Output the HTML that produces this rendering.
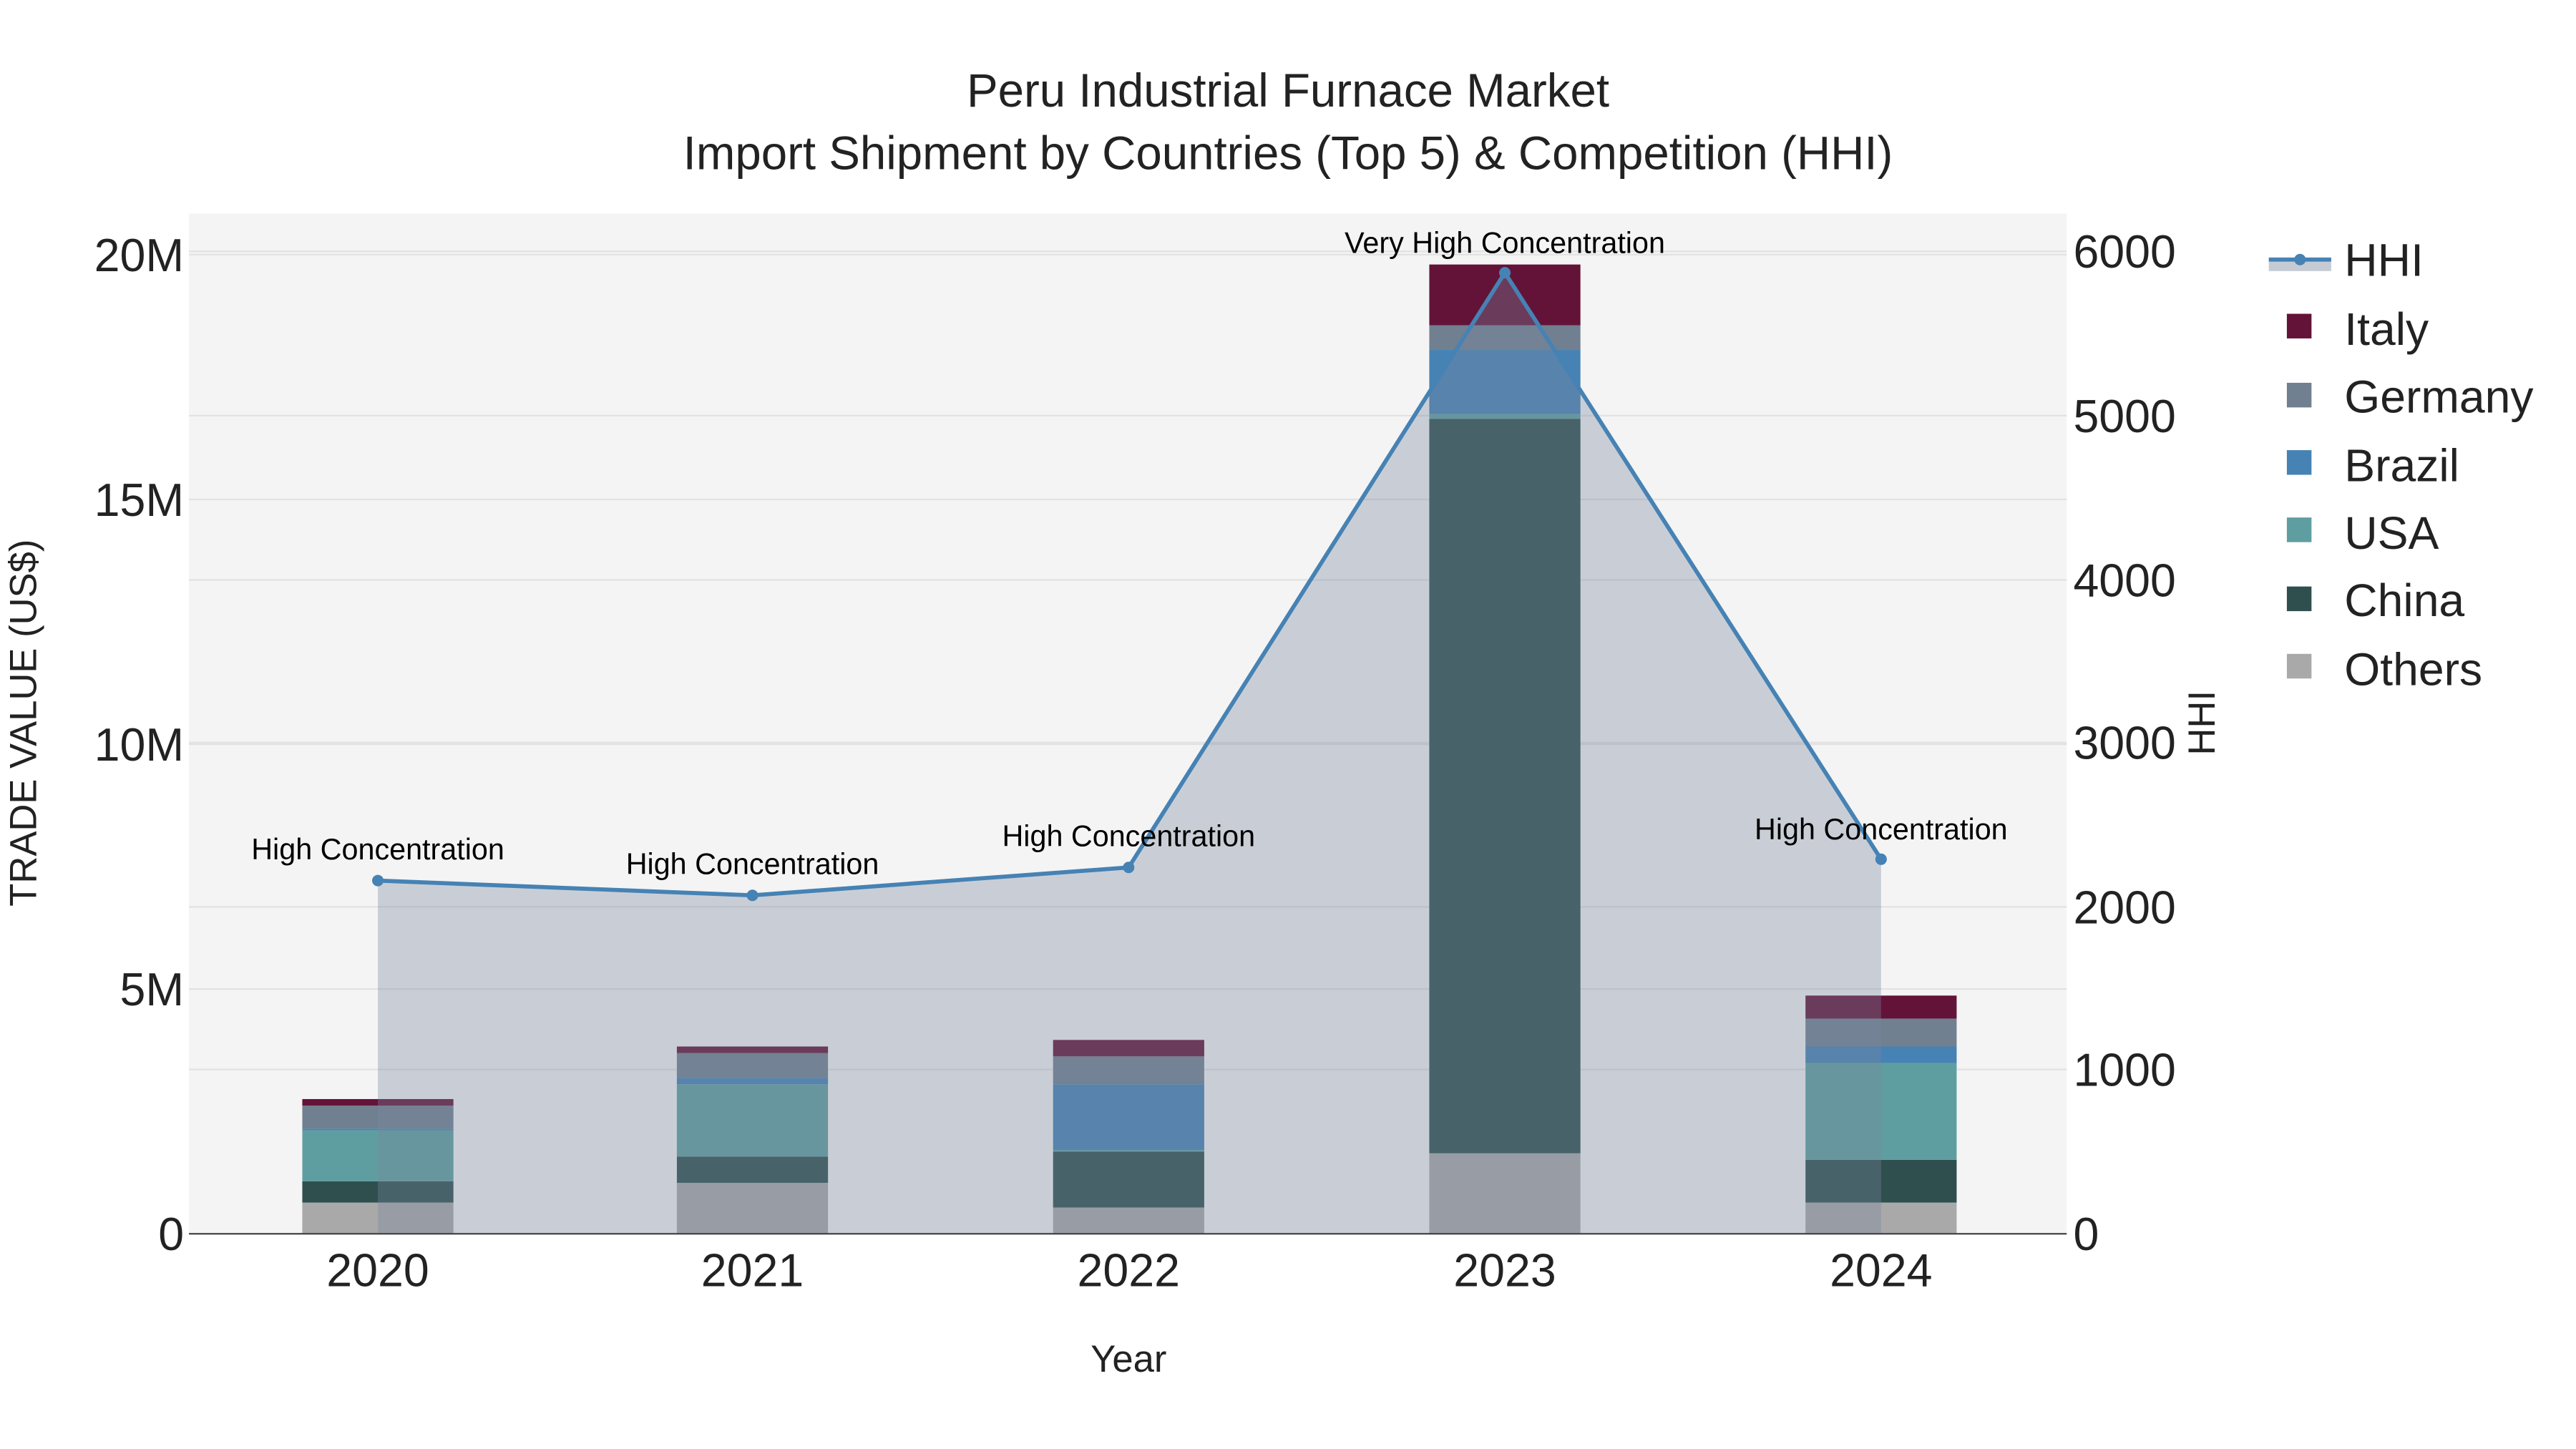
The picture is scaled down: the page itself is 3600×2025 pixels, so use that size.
<!DOCTYPE html>
<html><head><meta charset="utf-8"><style>html,body{margin:0;padding:0;background:#fff}svg{display:block}</style></head>
<body>
<svg width="3600" height="2025" viewBox="0 0 1568 882" preserveAspectRatio="none" xmlns="http://www.w3.org/2000/svg" font-family="'Liberation Sans', sans-serif">
<rect width="1568" height="882" fill="#fff"/>
<rect x="115" y="130" width="1143" height="621" fill="#f4f4f4"/>
<g stroke="#e2e2e2" stroke-width="1">
<line x1="115" x2="1258" y1="602" y2="602"/><line x1="115" x2="1258" y1="453" y2="453"/><line x1="115" x2="1258" y1="304" y2="304"/><line x1="115" x2="1258" y1="155" y2="155"/>
<line x1="115" x2="1258" y1="651" y2="651"/><line x1="115" x2="1258" y1="552" y2="552"/><line x1="115" x2="1258" y1="452" y2="452"/><line x1="115" x2="1258" y1="353" y2="353"/><line x1="115" x2="1258" y1="253" y2="253"/><line x1="115" x2="1258" y1="153" y2="153"/>
</g>
<g>
<rect x="184" y="732" width="92" height="19" fill="#a9a9a9"/><rect x="184" y="719" width="92" height="13" fill="#2f4f4f"/><rect x="184" y="688" width="92" height="31" fill="#5f9ea0"/><rect x="184" y="687" width="92" height="1" fill="#4682b4"/><rect x="184" y="673" width="92" height="14" fill="#708090"/><rect x="184" y="669" width="92" height="4" fill="#641338"/>
<rect x="412" y="720" width="92" height="31" fill="#a9a9a9"/><rect x="412" y="704" width="92" height="16" fill="#2f4f4f"/><rect x="412" y="660" width="92" height="44" fill="#5f9ea0"/><rect x="412" y="656" width="92" height="4" fill="#4682b4"/><rect x="412" y="641" width="92" height="15" fill="#708090"/><rect x="412" y="637" width="92" height="4" fill="#641338"/>
<rect x="641" y="735" width="92" height="16" fill="#a9a9a9"/><rect x="641" y="701" width="92" height="34" fill="#2f4f4f"/><rect x="641" y="700" width="92" height="1" fill="#5f9ea0"/><rect x="641" y="660" width="92" height="40" fill="#4682b4"/><rect x="641" y="643" width="92" height="17" fill="#708090"/><rect x="641" y="633" width="92" height="10" fill="#641338"/>
<rect x="870" y="702" width="92" height="49" fill="#a9a9a9"/><rect x="870" y="255" width="92" height="447" fill="#2f4f4f"/><rect x="870" y="252" width="92" height="3" fill="#5f9ea0"/><rect x="870" y="213" width="92" height="39" fill="#4682b4"/><rect x="870" y="198" width="92" height="15" fill="#708090"/><rect x="870" y="161" width="92" height="37" fill="#641338"/>
<rect x="1099" y="732" width="92" height="19" fill="#a9a9a9"/><rect x="1099" y="706" width="92" height="26" fill="#2f4f4f"/><rect x="1099" y="647" width="92" height="59" fill="#5f9ea0"/><rect x="1099" y="637" width="92" height="10" fill="#4682b4"/><rect x="1099" y="620" width="92" height="17" fill="#708090"/><rect x="1099" y="606" width="92" height="14" fill="#641338"/>
</g>
<polygon points="230,536 458,545 687,528 916,166 1145,523 1145,751 230,751" fill="rgb(121,135,158)" fill-opacity="0.35"/>
<polyline points="230,536 458,545 687,528 916,166 1145,523" fill="none" stroke="#4682b4" stroke-width="2.5"/>
<g fill="#4682b4"><circle cx="230" cy="536" r="3.5"/><circle cx="458" cy="545" r="3.5"/><circle cx="687" cy="528" r="3.5"/><circle cx="916" cy="166" r="3.5"/><circle cx="1145" cy="523" r="3.5"/></g>
<line x1="115" x2="1258" y1="751" y2="751" stroke="#444" stroke-width="1"/>
<g font-size="18" text-anchor="middle" fill="#000">
<text x="230" y="523">High Concentration</text><text x="458" y="532">High Concentration</text><text x="687" y="515">High Concentration</text><text x="916" y="154">Very High Concentration</text><text x="1145" y="511">High Concentration</text>
</g>
<g font-size="28.1" fill="#222" text-anchor="end">
<text x="112" y="761">0</text><text x="112" y="612">5M</text><text x="112" y="463">10M</text><text x="112" y="314">15M</text><text x="112" y="165">20M</text>
</g>
<g font-size="28.1" fill="#222" text-anchor="start">
<text x="1262" y="761">0</text><text x="1262" y="661">1000</text><text x="1262" y="562">2000</text><text x="1262" y="462">3000</text><text x="1262" y="363">4000</text><text x="1262" y="263">5000</text><text x="1262" y="163">6000</text>
</g>
<g font-size="28.1" fill="#222" text-anchor="middle">
<text x="230" y="783">2020</text><text x="458" y="783">2021</text><text x="687" y="783">2022</text><text x="916" y="783">2023</text><text x="1145" y="783">2024</text>
</g>
<text x="687" y="835" font-size="22.9" text-anchor="middle" fill="#222">Year</text>
<text transform="translate(22,440) rotate(-90)" font-size="22.9" text-anchor="middle" fill="#222">TRADE VALUE (US$)</text>
<text transform="translate(1348,440) rotate(-90)" font-size="22.9" text-anchor="middle" fill="#222">HHI</text>
<g font-size="28.5" text-anchor="middle" fill="#222">
<text x="784" y="65">Peru Industrial Furnace Market</text>
<text x="784" y="103">Import Shipment by Countries (Top 5) &amp; Competition (HHI)</text>
</g>
<g font-size="28" fill="#222">
<rect x="1381" y="159" width="38" height="6" fill="rgb(158,168,184)" fill-opacity="0.6"/>
<line x1="1381" x2="1419" y1="158" y2="158" stroke="#4682b4" stroke-width="2.5"/><circle cx="1400" cy="158" r="3.5" fill="#4682b4"/>
<text x="1427" y="168">HHI</text>
<rect x="1392" y="191" width="15" height="15" fill="#641338"/><text x="1427" y="210">Italy</text>
<rect x="1392" y="233" width="15" height="15" fill="#708090"/><text x="1427" y="251">Germany</text>
<rect x="1392" y="274" width="15" height="15" fill="#4682b4"/><text x="1427" y="293">Brazil</text>
<rect x="1392" y="315" width="15" height="15" fill="#5f9ea0"/><text x="1427" y="334">USA</text>
<rect x="1392" y="357" width="15" height="15" fill="#2f4f4f"/><text x="1427" y="375">China</text>
<rect x="1392" y="398" width="15" height="15" fill="#a9a9a9"/><text x="1427" y="417">Others</text>
</g>
</svg>
</body></html>
